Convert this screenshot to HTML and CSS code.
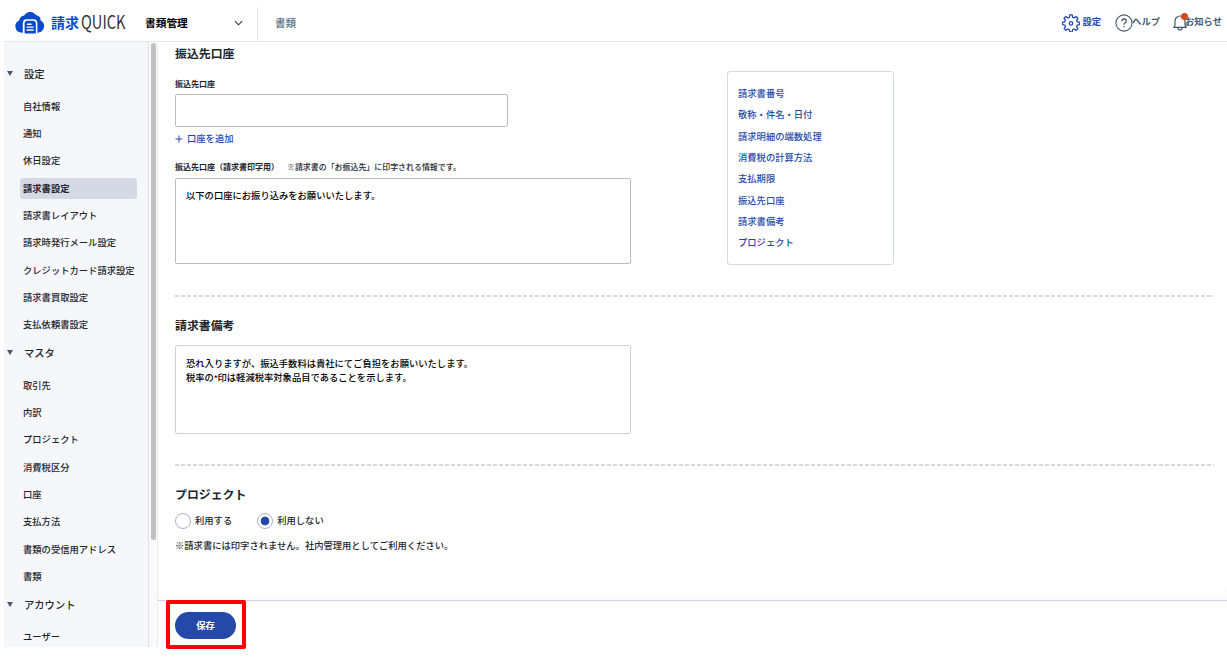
FILE: index.html
```html
<!DOCTYPE html>
<html lang="ja">

<head>
    <meta charset="UTF-8">
    <meta name="viewport" content="width=device-width, initial-scale=1.0">
    <title>請求書設定 | 請求QUICK</title>
    <link rel="stylesheet" href="styles.css">
</head>

<body>
    <header class="header">
        <a class="logo" href="#">
            <svg class="logo-mark" viewBox="0 0 30 22">
                <path d="M6.5 20.5A6.3 6.3 0 0 1 4.2 8.4 6 6 0 0 1 9.2 3.6 7 7 0 0 1 21 2.9 5.6 5.6 0 0 1 25.6 8.6 6.3 6.3 0 0 1 23.5 20.5L21.5 21.5H8.5Z" fill="#0a4bcb" />
                <path d="M7.8 22V11.5Q7.8 7.2 11.5 7.2H18.5Q22.4 7.2 22.4 11.5V22H20.8V11.8Q20.8 8.8 18 8.8H12.2Q9.6 8.8 9.6 11.8V22Z" fill="#fff" />
                <path d="M12 12.2h4.5M11.6 15.1h7M11.6 18h7" stroke="#fff" stroke-width="1.4" />
            </svg>
            <span class="logo-text"><b>請求</b><span class="logo-en">QUICK</span></span>
        </a>
        <div class="app-select">
            <span>書類管理</span>
            <svg class="chevron" viewBox="0 0 10 6"><path d="M1 1l4 4 4-4" fill="none" stroke="#333" stroke-width="1.2" /></svg>
        </div>
        <a class="header-tab" href="#">書類</a>
        <nav class="header-nav">
            <a class="nav-item active" href="#">
                <svg class="nav-icon" viewBox="0 0 24 24" fill="none" stroke="currentColor" stroke-width="1.7" stroke-linejoin="round">
                    <path d="M10.4 1.2h3.2l.6 3.2 2 .8 2.7-1.8 2.3 2.3-1.8 2.7.8 2 3.2.6v3.2l-3.2.6-.8 2 1.8 2.7-2.3 2.3-2.7-1.8-2 .8-.6 3.2h-3.2l-.6-3.2-2-.8-2.7 1.8-2.3-2.3 1.8-2.7-.8-2-3.2-.6V11l3.2-.6.8-2-1.8-2.7 2.3-2.3 2.7 1.8 2-.8z" />
                    <circle cx="12" cy="12.5" r="2.3" />
                </svg>
                <span>設定</span>
            </a>
            <a class="nav-item help" href="#">
                <svg class="nav-icon" viewBox="0 0 18 18" fill="none" stroke="currentColor" stroke-width="1.1">
                    <circle cx="9" cy="9" r="8.1" />
                    <path d="M6.9 7.3Q6.9 5 9.1 5T11.3 7Q11.3 8.1 10.1 8.9 9.1 9.5 9.1 10.7M9.1 12v1.3" stroke-width="1.3" />
                </svg>
                <span>ヘルプ</span>
            </a>
            <a class="nav-item notice" href="#">
                <svg class="nav-icon" viewBox="0 0 16 18" fill="none" stroke="currentColor" stroke-width="1.2">
                    <path d="M3 11V7A5 5 0 0 1 13 7V11Q13 12.7 14.6 13.4H1.4Q3 12.7 3 11M5.8 13.6Q6 16 8 16T10.2 13.6" />
                </svg>
                <span class="badge"></span>
                <span>お知らせ</span>
            </a>
        </nav>
    </header>

    <div class="container">
        <aside class="sidebar">
            <p class="menu-title">設定</p>
            <ul class="menu">
                <li>自社情報</li>
                <li>通知</li>
                <li>休日設定</li>
                <li class="current">請求書設定</li>
                <li>請求書レイアウト</li>
                <li>請求時発行メール設定</li>
                <li>クレジットカード請求設定</li>
                <li>請求書買取設定</li>
                <li>支払依頼書設定</li>
            </ul>
            <p class="menu-title">マスタ</p>
            <ul class="menu">
                <li>取引先</li>
                <li>内訳</li>
                <li>プロジェクト</li>
                <li>消費税区分</li>
                <li>口座</li>
                <li>支払方法</li>
                <li>書類の受信用アドレス</li>
                <li>書類</li>
            </ul>
            <p class="menu-title">アカウント</p>
            <ul class="menu">
                <li>ユーザー</li>
            </ul>
        </aside>
        <div class="scrollbar"><div class="thumb"></div></div>

        <main class="main">
            <div class="content">
                <div class="row">
                    <section class="section bank">
                        <h2>振込先口座</h2>
                        <label class="label" for="account">振込先口座</label>
                        <input class="input" id="account" type="text">
                        <a class="add-link" href="#">
                            <svg class="plus" viewBox="0 0 8 8"><path d="M4 .5v7M.5 4h7" stroke="currentColor" /></svg>口座を追加
                        </a>
                        <label class="label print-label" for="bankNote">振込先口座（請求書印字用）<span class="hint">※請求書の「お振込先」に印字される情報です。</span></label>
                        <textarea class="textarea" id="bankNote">以下の口座にお振り込みをお願いいたします。</textarea>
                    </section>
                    <nav class="toc">
                        <a href="#">請求書番号</a>
                        <a href="#">敬称・件名・日付</a>
                        <a href="#">請求明細の端数処理</a>
                        <a href="#">消費税の計算方法</a>
                        <a href="#">支払期限</a>
                        <a href="#">振込先口座</a>
                        <a href="#">請求書備考</a>
                        <a href="#">プロジェクト</a>
                    </nav>
                </div>
                <div class="divider"></div>
                <section class="section remarks">
                    <h2>請求書備考</h2>
                    <textarea class="textarea">恐れ入りますが、振込手数料は貴社にてご負担をお願いいたします。
税率の*印は軽減税率対象品目であることを示します。</textarea>
                </section>
                <div class="divider"></div>
                <section class="section project">
                    <h2>プロジェクト</h2>
                    <div class="radios">
                        <label><input type="radio" name="project">利用する</label>
                        <label><input type="radio" name="project" checked>利用しない</label>
                    </div>
                    <p class="note">※請求書には印字されません。社内管理用としてご利用ください。</p>
                </section>
            </div>
            <footer class="footer">
                <div class="highlight">
                    <button class="save">保存</button>
                </div>
            </footer>
        </main>
    </div>
</body>

</html>
```

FILE: styles.css
```css
* {
    box-sizing: border-box;
}

body {
    margin: 0;
    height: 658px;
    padding-left: 4px;
    overflow: hidden;
    background: #fff;
    color: #1d252c;
    font-family: "Liberation Sans", "Noto Sans CJK JP", sans-serif;
    font-size: 9.3px;
    font-weight: 500;
    line-height: 14px;
}

h2,
p,
ul {
    margin: 0;
    padding: 0;
}

a {
    color: inherit;
    text-decoration: none;
}

svg {
    display: block;
    flex: none;
}

/* header */
.header {
    display: flex;
    height: 42px;
    padding-top: 4px;
    border-bottom: 1px solid #e4e6e9;
    align-items: center;
}

.logo {
    display: flex;
    width: 141px;
    padding-left: 11px;
    align-items: center;
}

.logo-mark {
    width: 30px;
    height: 22px;
}

.logo-text {
    display: flex;
    margin-left: 6px;
    align-items: center;
    color: #0a4bcb;
    font-size: 14px;
    line-height: 20px;
    white-space: nowrap;
}

.logo-en {
    width: 47px;
    margin: -3px 0 0 2px;
    color: #333;
    font-family: "Noto Sans CJK JP", sans-serif;
    font-size: 18.5px;
    font-weight: 400;
    transform: scaleX(0.79);
    transform-origin: left center;
}

.app-select {
    display: flex;
    width: 113px;
    height: 34px;
    padding: 0 14px 3px 0;
    border-right: 1px solid #e4e6e9;
    align-items: center;
    justify-content: space-between;
    align-self: flex-end;
    color: #000;
    font-size: 10.7px;
    font-weight: bold;
}

.chevron {
    width: 9px;
    height: 6px;
}

.header-tab {
    margin-left: 17px;
    color: #6c7f92;
    font-size: 10.5px;
    font-weight: bold;
}

.header-nav {
    display: flex;
    margin-left: auto;
    padding-right: 5px;
    color: #45596b;
    font-weight: bold;
}

.nav-item {
    display: flex;
    position: relative;
    align-items: center;
    white-space: nowrap;
}

.nav-item.active {
    color: #2549a8;
}

.nav-item.active span {
    margin-left: 2px;
}

.nav-icon {
    width: 18px;
    height: 18px;
}

.nav-item span {
    margin-top: -1px;
}

.help {
    margin-left: 14px;
}

.help span {
    margin-left: -1px;
}

.notice {
    margin-left: 12px;
}

.notice .nav-icon {
    width: 16px;
    margin-right: -3px;
}

.badge {
    position: absolute;
    top: 0;
    left: 9px;
    width: 7px;
    height: 7px;
    border-radius: 50%;
    background: #d4481c;
}

/* sidebar */
.container {
    display: flex;
    height: 616px;
}

.sidebar {
    flex: none;
    width: 145px;
    height: 605px;
    padding: 18px 11px 0 16px;
    border-right: 1px solid #dfe2e6;
    background: #f5f7fb;
    overflow: hidden;
}

.menu-title {
    display: flex;
    position: relative;
    height: 33px;
    padding: 8px 0 0 4px;
    font-size: 10.3px;
}

.menu-title::before {
    content: "";
    position: absolute;
    top: 11px;
    left: -13px;
    border: 3px solid transparent;
    border-top: 5px solid #45596b;
    border-bottom: 0;
}

.menu {
    list-style: none;
}

.menu li {
    display: flex;
    height: 27.35px;
    padding-left: 3px;
    align-items: center;
    white-space: nowrap;
}

.menu .current {
    height: 21px;
    margin: 3.17px 0;
    border-radius: 3px;
    background: #d5d9e3;
    font-weight: bold;
}

.scrollbar {
    flex: none;
    width: 9px;
    height: 605px;
    padding: 1px 1px 0 2px;
    border-right: 1px solid #ececec;
    background: #fafafa;
}

.thumb {
    width: 5px;
    height: 497px;
    border-radius: 3px;
    background: #c1c1c1;
}

/* main */
.main {
    display: flex;
    flex: 1;
    flex-direction: column;
}

.content {
    flex: none;
    height: 558px;
    padding: 0 13px 0 17px;
    background: linear-gradient(#fff 545px, #fafafa);
}

.row {
    display: flex;
    height: 253px;
}

.section {
    display: flex;
    width: 456px;
    flex-direction: column;
    align-items: flex-start;
}

h2 {
    font-size: 11.9px;
    line-height: 18px;
}

.bank h2 {
    margin-top: 3px;
}

.label {
    margin-top: 16px;
    font-size: 8px;
    font-weight: bold;
    line-height: 12px;
    white-space: nowrap;
}

.hint {
    margin-left: 8px;
    font-size: 7.95px;
    font-weight: 500;
}

.input {
    width: 333px;
    height: 33px;
    margin-top: 3px;
    border: 1px solid #b5bccf;
    border-radius: 2px;
}

.add-link {
    display: flex;
    margin-top: 5px;
    align-items: center;
    color: #2549a8;
}

.plus {
    width: 8px;
    height: 8px;
    margin-right: 4px;
}

.print-label {
    margin-top: 16px;
}

.textarea {
    width: 456px;
    height: 86px;
    margin-top: 4px;
    padding: 10px;
    border: 1px solid #b5bccf;
    border-radius: 2px;
    color: #000;
    font: inherit;
    resize: none;
}

.toc {
    width: 167px;
    height: 194px;
    margin: 29px 0 0 96px;
    padding: 12px 10px 0;
    border: 1px solid #d6dae3;
    border-radius: 3px;
    color: #2549a8;
}

.toc a {
    display: block;
    height: 21.35px;
    line-height: 21.35px;
}

.divider {
    height: 2px;
    background: repeating-linear-gradient(90deg, #d5d9e0 0 4px, transparent 4px 6px);
}

.remarks {
    height: 167px;
    padding-top: 20px;
}

.remarks .textarea {
    height: 89px;
    margin-top: 10px;
    padding-top: 11px;
    border-color: #cdd2dd;
}

.project {
    padding-top: 20px;
}

.radios {
    display: flex;
    margin-top: 9px;
    gap: 25px;
}

.radios label {
    display: flex;
    align-items: center;
}

.radios input {
    width: 16px;
    height: 16px;
    margin: 0 4px 0 0;
    border: 1px solid #aab4c9;
    border-radius: 50%;
    background: #fff;
    appearance: none;
}

.radios input:checked {
    background: radial-gradient(circle, #2549a8 4px, #fff 4.7px);
}

.note {
    margin-top: 10px;
    white-space: nowrap;
}

.footer {
    border-top: 1px solid #cfd6e2;
    background: #fff;
}

/* frame around the save button, overlaps the footer border */
.highlight {
    position: relative;
    width: 80px;
    height: 49px;
    margin: -1px 0 0 8px;
    padding: 8px 5px;
    border: 4px solid #f00;
    border-radius: 2px;
}

.save {
    display: block;
    width: 61px;
    height: 27px;
    padding: 0;
    border: 0;
    border-radius: 14px;
    background: #2549a8;
    color: #fff;
    font: inherit;
    font-weight: bold;
}
```
